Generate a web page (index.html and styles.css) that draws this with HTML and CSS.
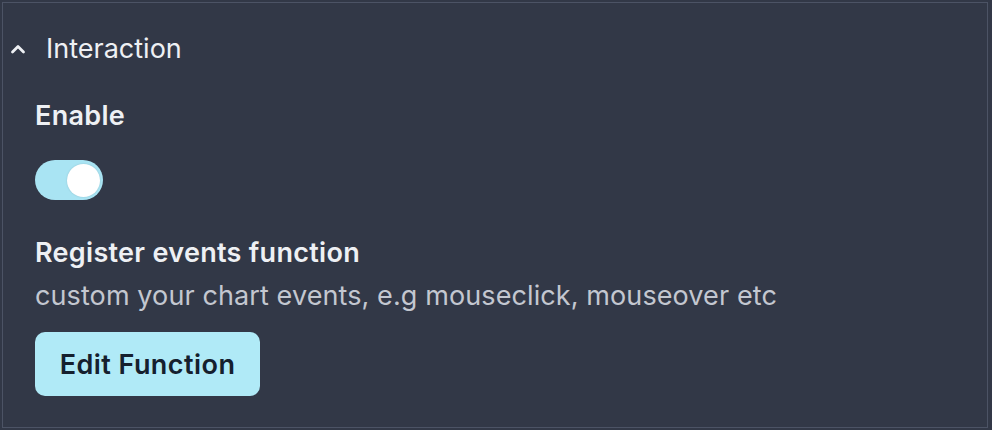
FILE: index.html
```html
<!DOCTYPE html>
<html>
<head>
<meta charset="utf-8">
<link rel="stylesheet" href="styles.css">
</head>
<body>
<div class="frame">
  <section class="panel">
    <div class="panel-head">
      <svg class="chev" width="18" height="18" viewBox="0 0 18 18"><path d="M3.5 12 L9 6.5 L14.5 12" fill="none" stroke="#eef0f4" stroke-width="2.8" stroke-linecap="round" stroke-linejoin="round"/></svg>
      <span class="panel-title">Interaction</span>
    </div>
    <div class="panel-body">
      <div class="label">Enable</div>
      <div class="toggle"><span class="thumb"></span></div>
      <div class="label label-reg">Register events function</div>
      <div class="desc">custom your chart events, e.g mouseclick, mouseover etc</div>
      <button class="btn">Edit Function</button>
    </div>
  </section>
</div>
</body>
</html>
```
FILE: styles.css
```css
html, body {
  margin: 0;
  padding: 0;
  background: #323847;
}
body {
  width: 992px;
  height: 430px;
  overflow: hidden;
  font-family: Inter, "Noto Sans", sans-serif;
}
.frame {
  box-sizing: border-box;
  width: 992px;
  height: 430px;
  padding: 2px 4px 2px 2px;
}
.panel {
  box-sizing: border-box;
  height: 100%;
  border: 1px solid #4c5365;
  background: #323847;
}
.panel-head {
  display: flex;
  align-items: center;
  height: 92px;
  padding-left: 6px;
  box-sizing: border-box;
}
.chev {
  margin-right: 19px;
}
.panel-title {
  color: #eef0f4;
  font-size: 27px;
  font-weight: 400;
  line-height: 32px;
}
.panel-body {
  margin-top: 5px;
  padding-left: 32px;
  display: flex;
  flex-direction: column;
  align-items: flex-start;
}
.label {
  color: #eef0f4;
  font-size: 27px;
  font-weight: 600;
  line-height: 32px;
  letter-spacing: 0.3px;
}
.toggle {
  margin-top: 28px;
  width: 68px;
  height: 40px;
  border-radius: 20px;
  background: #a9e4f3;
  display: flex;
  align-items: center;
  justify-content: flex-end;
  padding-right: 3px;
  box-sizing: border-box;
}
.thumb {
  width: 33px;
  height: 33px;
  border-radius: 50%;
  background: #ffffff;
  box-shadow: 0 0 2px rgba(0,0,0,0.15);
}
.label-reg {
  margin-top: 37px;
}
.desc {
  margin-top: 11px;
  color: #c3c7d0;
  font-size: 27px;
  line-height: 32px;
  letter-spacing: 0.1px;
}
.btn {
  margin-top: 20px;
  width: 225px;
  height: 64px;
  border: none;
  border-radius: 10px;
  background: #b0eaf7;
  color: #15202e;
  font-family: Inter, "Noto Sans", sans-serif;
  font-size: 27px;
  font-weight: 600;
  letter-spacing: 0.45px;
  padding: 0;
}
```
